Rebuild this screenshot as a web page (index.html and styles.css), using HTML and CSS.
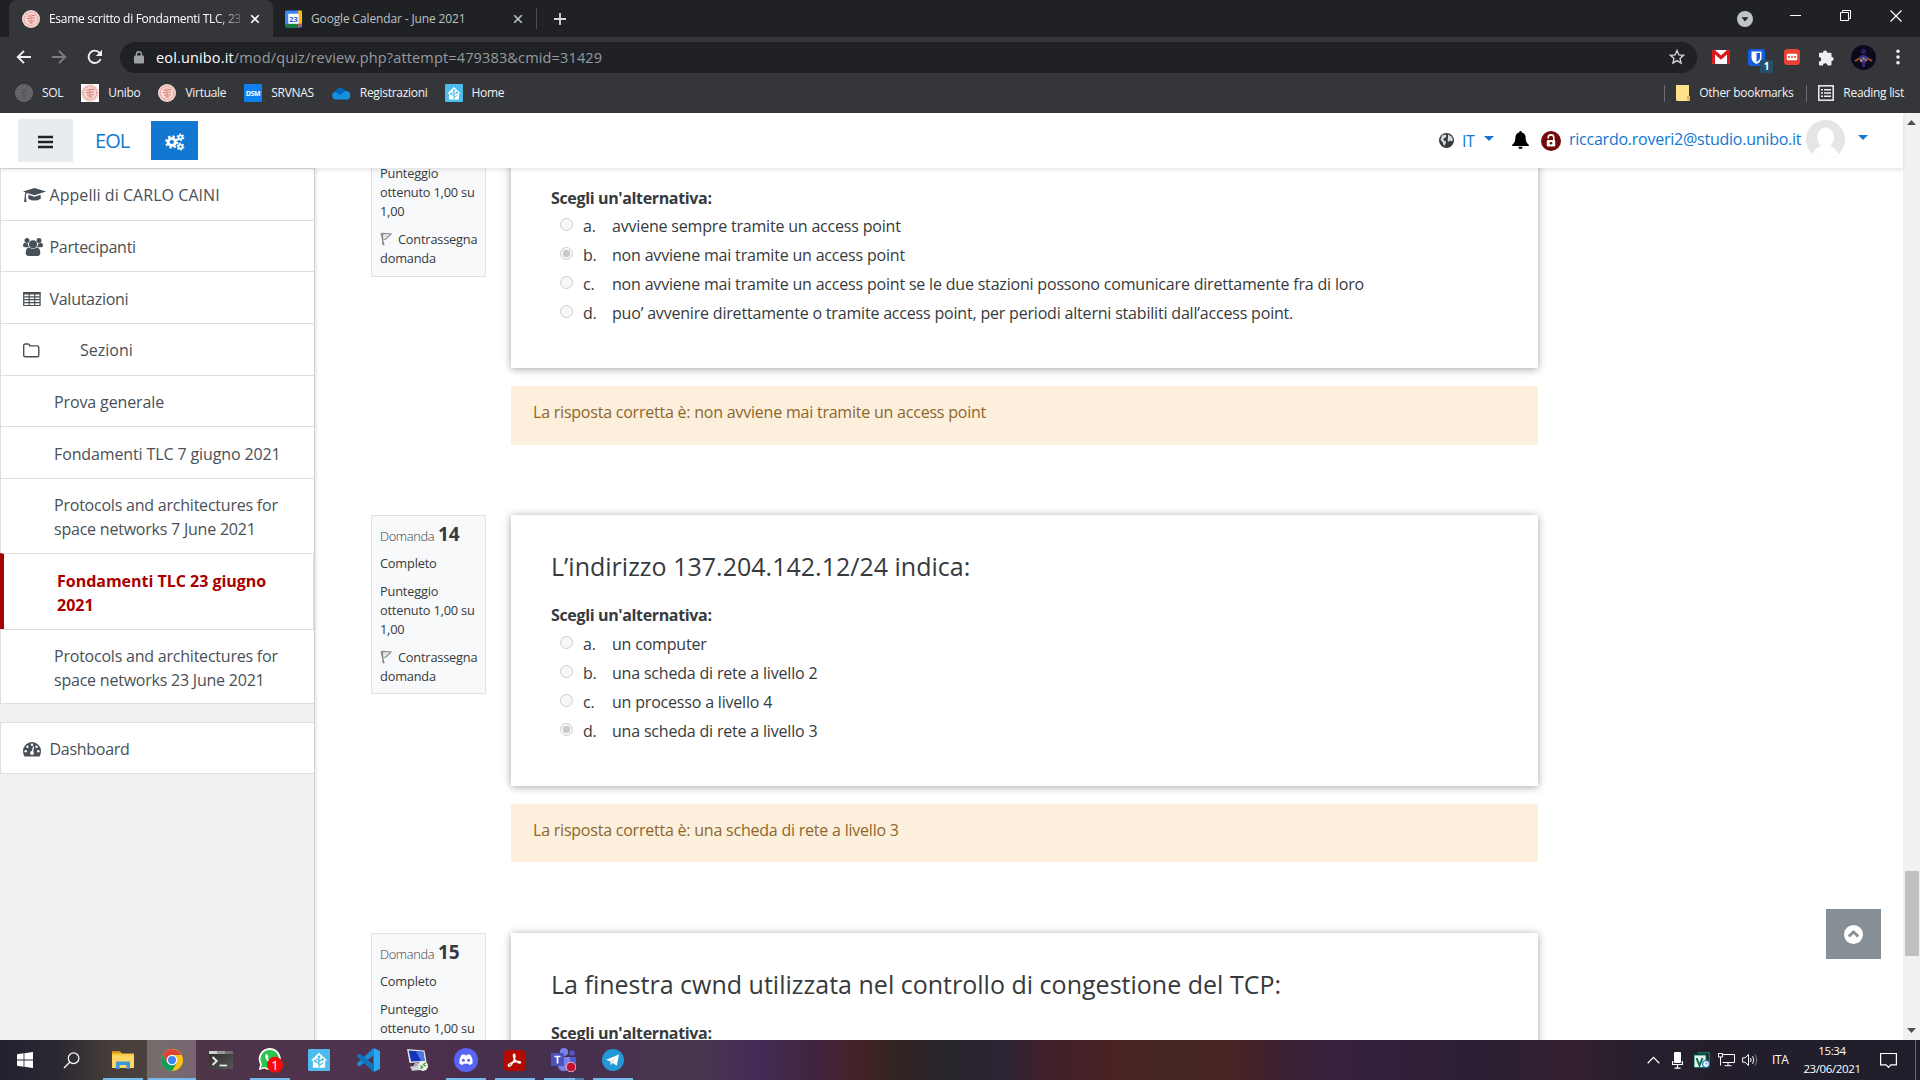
FILE: index.html
```html
<!DOCTYPE html>
<html lang="it">
<head>
<meta charset="utf-8">
<title>Esame scritto di Fondamenti TLC, 23 giugno 2021</title>
<link rel="stylesheet" href="styles.css">
</head>
<body>
<svg class="defs" width="0" height="0">
  <symbol id="seal" viewBox="0 0 18 18">
    <circle cx="9" cy="9" r="9" fill="#f6d9d5"/>
    <circle cx="9" cy="9" r="6.8" fill="none" stroke="#dc8f88" stroke-width="1.2" stroke-dasharray="1 .8"/>
    <path d="M5.5 6h3M10 5.5h3M5 8.5h3.5M10 8h3.2M6 11h2.5M9.8 10.8h3M7.5 13h3.5M9 4.5v8" stroke="#d5766e" stroke-width="1" fill="none"/>
  </symbol>
  <symbol id="close" viewBox="0 0 10 10"><path d="M1.2 1.2l7.6 7.6M8.8 1.2L1.2 8.8" stroke="currentColor" stroke-width="1.6"/></symbol>
  <symbol id="flag" viewBox="0 0 12 14"><path d="M1 1l3 12.5M2.8 12.6L2.6 1.4L11 2L6 7L3.6 7.4" fill="none" stroke="#888" stroke-width="1.2"/><path d="M4 3l5 .4-3.6 2.6z" fill="#d8d8d8"/></symbol>
  <symbol id="ha" viewBox="0 0 24 24">
    <rect width="24" height="24" rx="1.5" fill="#4cbcec"/>
    <path d="M12 4l9 8.5h-2.3V20.500H5.300V12.500H3z" fill="#fff"/>
    <path d="M12 20V9M12 16l-4-3M12 14l4-3M12 18l4.500-3M9 10.500l3 2" stroke="#4cbcec" stroke-width="1.300" fill="none"/>
    <circle cx="12" cy="8.500" r="1.500" fill="#4cbcec"/><circle cx="8" cy="13" r="1.400" fill="#4cbcec"/><circle cx="16" cy="11.500" r="1.400" fill="#4cbcec"/>
  </symbol>
</svg>

<div class="tabstrip">
  <div class="tab active">
    <svg class="i18"><use href="#seal"/></svg>
    <span class="tab-title fade">Esame scritto di Fondamenti TLC, 23</span>
    <svg class="i10"><use href="#close"/></svg>
  </div>
  <div class="tab">
    <svg class="cal" viewBox="0 0 18 18"><rect width="18" height="18" rx="1.500" fill="#4285f4"/><path d="M14 0h2.500A1.500 1.500 0 0 1 18 1.500V14h-4z" fill="#fbbc04"/><path d="M0 14h14v4H1.500A1.500 1.500 0 0 1 0 16.500z" fill="#188038"/><path d="M14 14h4l-4 4z" fill="#ea4335"/><rect x="3.500" y="3.500" width="11" height="10.500" fill="#fff"/><text x="9" y="12" text-anchor="middle" class="cal-day">23</text></svg>
    <span class="tab-title second">Google Calendar - June 2021</span>
    <svg class="i10"><use href="#close"/></svg>
  </div>
  <svg class="newtab" viewBox="0 0 14 14"><path d="M7 1v12M1 7h12" stroke="#d5d7da" stroke-width="1.800"/></svg>
  <div class="winctl">
    <svg width="16" height="16" viewBox="0 0 16 16"><circle cx="8" cy="8" r="8" fill="#c0c3c7"/><path d="M4.600 6.300h6.800L8 10.500z" fill="#202124"/></svg>
    <svg class="wb min" width="11" height="11"><path d="M0 5.500h11" stroke="#fff"/></svg>
    <svg class="wb" width="11" height="11"><path d="M.5 2.500h8v8h-8zM2.500 2.500v-2h8v8h-2" fill="none" stroke="#fff"/></svg>
    <svg class="wb" width="12" height="12"><path d="M.5.5l11 11M11.500.5l-11 11" stroke="#fff" stroke-width="1.200"/></svg>
  </div>
</div>

<div class="toolbar">
  <svg width="16" height="16" viewBox="0 0 16 16"><path d="M15 8H2M8 1.800L1.800 8 8 14.200" fill="none" stroke="#f1f1f1" stroke-width="1.900"/></svg>
  <svg width="16" height="16" viewBox="0 0 16 16"><path d="M1 8h13M8 1.800L14.200 8 8 14.200" fill="none" stroke="#7d7f83" stroke-width="1.900"/></svg>
  <svg width="16" height="16" viewBox="0 0 16 16"><path d="M13.600 10A6.200 6.200 0 1 1 12.600 3.900" fill="none" stroke="#f1f1f1" stroke-width="1.900"/><path d="M15 .8v6.200H8.800z" fill="#f1f1f1"/></svg>
  <div class="omnibox">
    <svg width="10" height="13" viewBox="0 0 10 13"><rect y="4.500" width="10" height="8" rx="1.200" fill="#9aa0a6"/><path d="M2.500 5V3.200a2.500 2.500 0 0 1 5 0V5" fill="none" stroke="#9aa0a6" stroke-width="1.500"/></svg>
    <span class="url"><b>eol.unibo.it</b>/mod/quiz/review.php?attempt=479383&amp;cmid=31429</span>
    <svg class="star" width="16" height="16" viewBox="0 0 16 16"><path d="M8 1.500l1.900 4.400 4.700.4-3.600 3.100 1.100 4.700L8 11.600l-4.100 2.500L5 9.400 1.400 6.300l4.700-.4z" fill="none" stroke="#d5d7da" stroke-width="1.300"/></svg>
  </div>
  <div class="exts">
    <svg width="18" height="14" viewBox="0 0 18 14"><rect width="18" height="14" rx="1.500" fill="#fff"/><path d="M0 1.200Q0 0 1.200 0H3l6 5.500L15 0h1.800Q18 0 18 1.200V12.800Q18 14 16.800 14H15V4.600L9 9.800 3 4.600V14H1.200Q0 14 0 12.800z" fill="#d81a1a"/></svg>
    <div class="bw">
      <svg width="17" height="17" viewBox="0 0 17 17"><rect width="17" height="17" rx="3" fill="#175ddc"/><path d="M3.500 2.500h10v6q0 4-5 6.500-5-2.500-5-6.500z" fill="#fff"/><path d="M8.500 4h3.500v4.500q0 2.700-3.500 4.500z" fill="#175ddc"/></svg>
      <span class="bw-n">1</span>
    </div>
    <svg width="16" height="16" viewBox="0 0 16 16"><rect width="16" height="16" rx="3.500" fill="#ea4335"/><rect x="2.800" y="4.800" width="10.400" height="6.400" rx="1" fill="#fff"/><path d="M4 8h2M7 8h2M10 8h2" stroke="#ea4335" stroke-width="1.700"/></svg>
    <svg width="17" height="17" viewBox="0 0 17 17"><path d="M5 3.700a2.100 2.100 0 0 1 4.200 0h3.300a1 1 0 0 1 1 1v3.100a2.100 2.100 0 0 1 0 4.200v3.500a1 1 0 0 1-1 1h-3a2.300 2.300 0 0 0-4.600 0H2a1 1 0 0 1-1-1v-3a2.200 2.200 0 0 0 0-4.500V4.700a1 1 0 0 1 1-1z" fill="#eeeef0"/></svg>
    <svg width="25" height="25" viewBox="0 0 25 25"><circle cx="12.500" cy="12.500" r="12.500" fill="#0a0a1c"/><circle cx="12.500" cy="6.500" r="2.500" fill="#29245f"/><path d="M8.500 11.500q4-3 8 0l-2 7h-4z" fill="#46308e"/><path d="M4 16l5-3M21 16l-5-3" stroke="#a0503c" stroke-width="2"/><circle cx="10" cy="15.500" r="1.200" fill="#e0a23b"/><circle cx="15" cy="15" r="1.200" fill="#e2577a"/><circle cx="12.500" cy="13.500" r="1.200" fill="#39b87c"/><path d="M11 19h3v3h-3z" fill="#33275f"/></svg>
    <svg width="4" height="16" viewBox="0 0 4 16"><g fill="#f1f1f1"><circle cx="2" cy="2.200" r="1.800"/><circle cx="2" cy="8" r="1.800"/><circle cx="2" cy="13.800" r="1.800"/></g></svg>
  </div>
</div>

<div class="bookmarks">
  <span class="bm"><svg class="i18 dim"><use href="#seal"/></svg>SOL</span>
  <span class="bm"><svg class="i18 whitebg"><use href="#seal"/></svg>Unibo</span>
  <span class="bm"><svg class="i18"><use href="#seal"/></svg>Virtuale</span>
  <span class="bm"><svg class="i18" viewBox="0 0 18 18"><rect width="18" height="18" rx="1" fill="#0f80f0"/><text x="9" y="12" text-anchor="middle" class="dsm">DSM</text></svg>SRVNAS</span>
  <span class="bm"><svg class="i18" viewBox="0 0 18 18"><path d="M4 15.500a3.900 3.900 0 0 1-.8-7.700A5.800 5.800 0 0 1 13.500 7a4.300 4.300 0 0 1 1.500 8.500z" fill="#1490df"/><path d="M3.200 7.800A5.800 5.800 0 0 1 13.500 7L8 11z" fill="#0364b8"/></svg>Registrazioni</span>
  <span class="bm"><svg class="i18"><use href="#ha"/></svg>Home</span>
  <div class="bm-right">
    <i class="vsep"></i>
    <span class="bm"><svg width="14" height="16" viewBox="0 0 14 16"><path d="M0 0h13v11h1v5H1L0 15z" fill="#fde08a"/><path d="M11 11h3v5l-3-1z" fill="#e6b93c"/></svg>Other bookmarks</span>
    <i class="vsep"></i>
    <span class="bm"><svg width="16" height="16" viewBox="0 0 16 16"><rect x=".8" y=".8" width="14.400" height="14.400" fill="none" stroke="#f1f1f1" stroke-width="1.500"/><path d="M3 4.800h2M6 4.800h7M3 8h2M6 8h7M3 11.200h2M6 11.200h7" stroke="#f1f1f1" stroke-width="1.500"/></svg>Reading list</span>
  </div>
</div>

<div class="page">
  <div class="site">
    <header class="navbar">
      <button class="nav-toggle"><svg width="15" height="14"><path d="M0 2h15M0 7h15M0 12h15" stroke="#222" stroke-width="2.400"/></svg></button>
      <a class="brand">EOL</a>
      <button class="nav-cogs"><svg width="20" height="18" viewBox="0 0 20 18"><g fill="none" stroke="#fff"><circle cx="6.800" cy="9" r="3.600" stroke-width="3"/><circle cx="6.800" cy="9" r="5.700" stroke-width="2" stroke-dasharray="2.300 2.177"/><circle cx="15.500" cy="4.300" r="2" stroke-width="1.800"/><circle cx="15.500" cy="4.300" r="3.300" stroke-width="1.200" stroke-dasharray="1.700 1.756"/><circle cx="15.500" cy="13.700" r="2" stroke-width="1.800"/><circle cx="15.500" cy="13.700" r="3.300" stroke-width="1.200" stroke-dasharray="1.700 1.756"/></g></svg></button>
      <div class="user">
        <svg width="15" height="15" viewBox="0 0 15 15"><circle cx="7.500" cy="7.500" r="7.500" fill="#373a3c"/><path d="M3 2.500l3.500-1 1 1.500-1.500 2L4 6l1 1.500 2 1-.5 2.500L5 13 3.500 9 1.500 7zM9 1.500l3.500 2 1.500 3-1 2-2-1-1.500 1.500L8.500 7l.5-2z" fill="#d8dadc"/></svg>
        <span class="lang">IT</span><i class="caret c1"></i>
        <svg class="bell" width="17" height="18" viewBox="0 0 17 18"><path d="M8.500 0a1.200 1.200 0 0 1 1.200 1.400c2.500.5 3.900 2.400 3.900 4.900 0 4 1.200 6 3.200 7.500v1.200H.2v-1.200c2-1.500 3.200-3.500 3.200-7.500 0-2.500 1.400-4.400 3.900-4.900A1.200 1.200 0 0 1 8.500 0zM6.300 15.700h4.400a2.200 2.200 0 0 1-4.400 0z" fill="#000"/></svg>
        <svg class="lockc" width="20" height="20" viewBox="0 0 20 20"><circle cx="10" cy="10" r="10" fill="#720c0c"/><rect x="5.800" y="9" width="8.400" height="6.500" rx="1" fill="#fff"/><path d="M7.200 7.500V6.500a2.800 2.600 0 0 1 5.600 0V9.500" fill="none" stroke="#fff" stroke-width="1.600"/><circle cx="10" cy="12.200" r="1.300" fill="#720c0c"/></svg>
        <span class="mail">riccardo.roveri2@studio.unibo.it</span>
        <svg class="avatar" width="39" height="39" viewBox="0 0 39 39"><clipPath id="av"><circle cx="19.500" cy="19.500" r="19.500"/></clipPath><g clip-path="url(#av)"><rect width="39" height="39" fill="#e5e5e5"/><ellipse cx="19.500" cy="17.500" rx="8.500" ry="10" fill="#fff"/><path d="M5 39Q7 29 15 25.500h9Q32 29 34 39z" fill="#fff"/></g></svg>
        <i class="caret c2"></i>
      </div>
    </header>

    <div class="body">
      <nav class="drawer">
        <a class="item"><svg width="23" height="16" viewBox="0 0 23 16"><path d="M11.500 1L23 4.600 11.500 8.200 4 5.900Q2.800 7 2.900 9l.6 6H1l.8-6Q1.600 7 2.600 5.400L0 4.600zM5.500 7.800l6 1.900 6-1.900.4 3.600q-2.800 2.200-6.400 2.200T5.100 11.400z" fill="#495057"/></svg><span class="l0">Appelli di CARLO CAINI</span></a>
        <a class="item"><svg width="20" height="18" viewBox="0 0 20 18"><g fill="#495057"><circle cx="4" cy="2.500" r="2.500"/><circle cx="16" cy="2.500" r="2.500"/><circle cx="10" cy="6.300" r="4"/><path d="M0 8q0-3 2-3.200Q4 6 5 5.200 4.600 7.500 6 9.300H2.300Q0 9.300 0 8zM20 8q0-3-2-3.200Q16 6 15 5.200q.4 2.300-1 4.100h3.700Q20 9.300 20 8zM2.700 15q0-5.400 3.600-5.600Q10 12 13.700 9.400q3.600.2 3.600 5.600 0 3-3 3H5.700q-3 0-3-3z"/></g></svg><span class="l1">Partecipanti</span></a>
        <a class="item"><svg width="18" height="16" viewBox="0 0 18 16"><path d="M.7 1.500h16.400v13H.7zM.7 5.800h16.400M.7 8.700h16.400M.7 11.600h16.400M6.200 3v11.500M11.700 3v11.500" fill="none" stroke="#495057" stroke-width="1.200"/><path d="M.5 1.500h17v2H.5z" fill="#495057"/></svg><span class="l1">Valutazioni</span></a>
        <a class="item"><svg width="17" height="15" viewBox="0 0 17 15"><path d="M.7 2.500Q.7 1 2.200 1h3Q6.700 1 6.700 2.900h7.600q1.500 0 1.500 1.500v7.800q0 1.500-1.500 1.500H2.200q-1.500 0-1.500-1.500z" fill="none" stroke="#495057" stroke-width="1.400"/></svg><span class="l2">Sezioni</span></a>
        <a class="item sub">Prova generale</a>
        <a class="item sub">Fondamenti TLC 7 giugno 2021</a>
        <a class="item sub two">Protocols and architectures for space networks 7 June 2021</a>
        <a class="item sub two current">Fondamenti TLC 23 giugno 2021</a>
        <a class="item sub two">Protocols and architectures for space networks 23 June 2021</a>
        <a class="item dash"><svg width="18" height="15" viewBox="0 0 18 15"><path d="M9 0a9 9 0 0 1 9 9q0 3-1.500 5.500h-15Q0 12 0 9a9 9 0 0 1 9-9z" fill="#495057"/><g fill="#fff"><circle cx="9" cy="2.800" r="1.200"/><circle cx="4.400" cy="4.700" r="1.200"/><circle cx="13.600" cy="4.700" r="1.200"/><circle cx="2.700" cy="9.200" r="1.200"/><circle cx="15.300" cy="9.200" r="1.200"/></g><path d="M10.600 4.500L9.200 10.500" stroke="#fff" stroke-width="1.200"/><circle cx="9" cy="11" r="1.900" fill="#fff"/></svg><span class="l1">Dashboard</span></a>
      </nav>

      <main class="quiz">
        <section class="question scrolled">
          <aside class="info">
            <p class="grade">Punteggio<br>ottenuto 1,00 su<br>1,00</p>
            <p class="mark"><svg width="12" height="14"><use href="#flag"/></svg>Contrassegna domanda</p>
          </aside>
          <div class="content">
            <div class="card">
              <p class="prompt">Scegli un'alternativa:</p>
              <ul class="answers">
                <li><i class="radio"></i><em>a.</em>avviene sempre tramite un access point</li>
                <li><i class="radio on"></i><em>b.</em>non avviene mai tramite un access point</li>
                <li><i class="radio"></i><em>c.</em>non avviene mai tramite un access point se le due stazioni possono comunicare direttamente fra di loro</li>
                <li><i class="radio"></i><em>d.</em>puo’ avvenire direttamente o tramite access point, per periodi alterni stabiliti dall’access point.</li>
              </ul>
            </div>
            <div class="outcome">La risposta corretta è: non avviene mai tramite un access point</div>
          </div>
        </section>

        <section class="question">
          <aside class="info">
            <p class="no">Domanda <b>14</b></p><p class="state">Completo</p>
            <p class="grade">Punteggio<br>ottenuto 1,00 su<br>1,00</p>
            <p class="mark"><svg width="12" height="14"><use href="#flag"/></svg>Contrassegna domanda</p>
          </aside>
          <div class="content">
            <div class="card">
              <h3 class="qtext">L’indirizzo 137.204.142.12/24 indica:</h3>
              <p class="prompt">Scegli un'alternativa:</p>
              <ul class="answers">
                <li><i class="radio"></i><em>a.</em>un computer</li>
                <li><i class="radio"></i><em>b.</em>una scheda di rete a livello 2</li>
                <li><i class="radio"></i><em>c.</em>un processo a livello 4</li>
                <li><i class="radio on"></i><em>d.</em>una scheda di rete a livello 3</li>
              </ul>
            </div>
            <div class="outcome">La risposta corretta è: una scheda di rete a livello 3</div>
          </div>
        </section>

        <section class="question">
          <aside class="info">
            <p class="no">Domanda <b>15</b></p><p class="state">Completo</p>
            <p class="grade">Punteggio<br>ottenuto 1,00 su</p>
          </aside>
          <div class="content">
            <div class="card">
              <h3 class="qtext">La finestra cwnd utilizzata nel controllo di congestione del TCP:</h3>
              <p class="prompt">Scegli un'alternativa:</p>
            </div>
          </div>
        </section>
      </main>
      <button class="totop"><svg width="19" height="19" viewBox="0 0 19 19"><circle cx="9.500" cy="9.500" r="9.500" fill="#fff"/><path d="M4.800 11.600L9.500 7l4.700 4.600" fill="none" stroke="#868e96" stroke-width="2.800"/></svg></button>
    </div>
  </div>
  <div class="scrollbar">
    <svg width="9" height="5"><path d="M0 5L4.500 0 9 5z" fill="#505050"/></svg>
    <div class="thumb"></div>
    <svg width="9" height="5"><path d="M0 0l4.500 5L9 0z" fill="#505050"/></svg>
  </div>
</div>

<div class="taskbar">
  <div class="slot"><svg width="16" height="16" viewBox="0 0 16 16"><path d="M0 2.200l6.600-.9v6.300H0zM7.400 1.200L16 0v7.600H7.400zM0 8.400h6.600v6.300L0 13.800zM7.400 8.400H16V16l-8.600-1.200z" fill="#fff"/></svg></div>
  <div class="slot"><svg class="find" width="17" height="17" viewBox="0 0 18 18"><circle cx="11.200" cy="6.600" r="5.600" fill="none" stroke="#fff" stroke-width="1.300"/><path d="M7.200 10.800L1 17" stroke="#fff" stroke-width="1.300"/></svg></div>
  <div class="slot run"><svg width="22" height="20" viewBox="0 0 22 20"><path d="M0 1.500h8l2 2h12V18H0z" fill="#f9c846"/><path d="M0 1.500h8l1.500 2H0z" fill="#e09b10"/><path d="M0 5.500h22V18H0z" fill="#fdd663"/><path d="M4 19v-6.500q0-1 1-1h12q1 0 1 1V19h-3.500v-4h-7v4z" fill="#3a96dd"/></svg></div>
  <div class="slot run front"><svg width="22" height="22" viewBox="0 0 24 24"><circle cx="12" cy="12" r="12" fill="#fbc116"/><path d="M1.600 6A12 12 0 0 0 0 12 12 12 0 0 0 12 24l5.200-9-10.400 0z" fill="#0f9d58"/><path d="M1.600 6A12 12 0 0 1 22.400 6.500H12L6.800 15z" fill="#db4437"/><circle cx="12" cy="12" r="5.800" fill="#fff"/><circle cx="12" cy="12" r="4.500" fill="#4285f4"/></svg></div>
  <div class="slot"><svg width="24" height="18" viewBox="0 0 24 18"><defs><linearGradient id="tg" x2="1" y2="1"><stop stop-color="#2b2b2b"/><stop offset="1" stop-color="#565656"/></linearGradient></defs><rect width="24" height="18" fill="url(#tg)"/><path d="M0 0h8v3H0z" fill="#cfcfcf"/><path d="M8 0h8v3H8z" fill="#999"/><path d="M16 0h8v3h-8z" fill="#6d6d6d"/><path d="M3.500 6l4.200 4-4.200 4" fill="none" stroke="#e6e6e6" stroke-width="2"/><path d="M10.500 14.500H18" stroke="#e6e6e6" stroke-width="1.800"/></svg></div>
  <div class="slot run"><svg class="wa" width="25" height="25" viewBox="0 0 25 25"><path d="M.8 22L2.200 16.500A11 11 0 1 1 6.300 20.600z" fill="#fff"/><path d="M2.800 20L3.900 16A9.200 9.200 0 1 1 6.800 18.900z" fill="#2cc64f"/><path d="M8.800 5.800q-2 1-1.500 3.400 1.300 4.800 6.400 6.400 2.700.3 3-2.600l-2.600-1.200-1.200 1.300q-2.300-1-3.400-3.400l1-1.200z" fill="#fff"/><circle cx="17" cy="16.800" r="8" fill="#f70b0b"/><text x="17" y="21.500" text-anchor="middle" class="wan">1</text></svg></div>
  <div class="slot"><svg width="22" height="22"><use href="#ha"/></svg></div>
  <div class="slot"><svg width="24" height="24" viewBox="0 0 24 24"><path d="M17.500 0L24 3v18l-6.500 3z" fill="#2aa8f2"/><path d="M17.500 0L1 15.200q-.8.800 0 1.500l1.600 1.400q.7.500 1.400 0L17.500 7.500z" fill="#1b8bd6"/><path d="M17.500 24L1 8.800q-.8-.8 0-1.500l1.600-1.400q.7-.5 1.400 0l13.500 10.600z" fill="#1273b8"/></svg></div>
  <div class="slot"><svg width="24" height="24" viewBox="0 0 24 24"><path d="M2 1l17.500 1.500 2 11.500L4.500 15z" fill="#dfe3e8"/><path d="M3.700 2.500l14.500 1.200 1.500 9-13.600.9z" fill="#1733b8"/><path d="M11 3.200l7.200.5 1.500 9-3.700.3z" fill="#5076e0"/><path d="M10 15h6l2 3.500H8z" fill="#aeb4bc"/><path d="M5 18.500l12-.8 3 4-13 1z" fill="#ced2d6"/><circle cx="18" cy="18" r="5" fill="#e8efe4"/><path d="M15.500 17.500l2 1.800-2 1.500M20.500 15l-2 1.600 2 1.700" stroke="#3c9a37" stroke-width="1.300" fill="none"/></svg></div>
  <div class="slot run"><svg width="24" height="24" viewBox="0 0 24 24"><circle cx="12" cy="12" r="12" fill="#5865f2"/><path d="M7.300 7.300q1.500-.9 3-1l.5.900h2.400l.5-.9q1.500.1 3 1 2.300 3.400 2 8-1.800 1.400-3.500 1.800l-.9-1.500q-2.300.5-4.600 0L8.800 17.100Q7 16.700 5.300 15.300q-.3-4.600 2-8z" fill="#fff"/><circle cx="9.400" cy="12.200" r="1.500" fill="#5865f2"/><circle cx="14.600" cy="12.200" r="1.500" fill="#5865f2"/></svg></div>
  <div class="slot run"><svg width="21" height="21" viewBox="0 0 21 21"><rect width="21" height="21" rx="3.500" fill="#b30b00"/><path d="M4.500 15.800c-1-1.500 3-3.300 6.500-4 3-.6 5.700-.5 5.500.8-.3 1.400-4.600-.6-6.300-4C9 6 9.300 4 10.300 4.200c1.500.3.500 5-1.500 8.500-1.600 2.700-3.500 4.300-4.300 3.100z" fill="none" stroke="#fff" stroke-width="1.400"/></svg></div>
  <div class="slot run more"><svg width="25" height="24" viewBox="0 0 25 24"><circle cx="13" cy="4" r="4" fill="#7b83eb"/><circle cx="21" cy="5" r="2.800" fill="#5059c9"/><path d="M17 9h7q1 0 1 1v6q0 4-4 4h-4z" fill="#5059c9"/><path d="M7 9h12v8q0 6-6 6t-6-6z" fill="#7b83eb"/><rect y="5" width="13" height="13" rx="1" fill="#4b53bc"/><path d="M3.500 8.500h6M6.500 8.500v7" stroke="#fff" stroke-width="1.700"/><circle cx="20" cy="19" r="4.800" fill="#c4112f" stroke="#e6c7d4" stroke-width=".9"/></svg></div>
  <div class="slot run"><svg width="22" height="22" viewBox="0 0 22 22"><circle cx="11" cy="11" r="11" fill="#2299d6"/><path d="M4 10.800l13-5.300-2.200 11.300-4-2.700-2 2-.5-3.600z" fill="#fff"/><path d="M8.300 12.500l6.500-4.700-5 5.400-.8 2.700z" fill="#b9d5e8"/></svg></div>
  <div class="tray">
    <svg class="t1" width="13" height="8"><path d="M.7 7.200L6.500 1.400l5.800 5.800" fill="none" stroke="#fff" stroke-width="1.300"/></svg>
    <svg class="t2" width="11" height="17" viewBox="0 0 11 17"><rect x="2" width="7" height="11" rx="1" fill="#fff"/><path d="M.6 9v3.500h9.800V9M5.500 13v3M2.500 16.200h6" fill="none" stroke="#fff" stroke-width="1.200"/></svg>
    <svg class="t3" width="16" height="16" viewBox="0 0 16 16"><path d="M3.500.7h11.800V11" fill="none" stroke="#0b7a5c" stroke-width="1.400"/><rect y="3" width="12" height="12.500" fill="#e9f3ee" stroke="#0b7a5c"/><path d="M2.500 6l3 7.500 3-7.500" fill="none" stroke="#0b6e53" stroke-width="2"/><circle cx="12" cy="12" r="4" fill="#2b7fc0"/><circle cx="12" cy="12" r="2.700" fill="#fff"/><path d="M12 10.500V12h1.300" stroke="#2b7fc0" fill="none"/></svg>
    <svg class="t4" width="17" height="16" viewBox="0 0 17 16"><path d="M5 2.500h11.500v8H4.500M10 10.500v3M6.500 13.700h7M.5 1.500h4v3.500h-4zM2.500 5v8.500" fill="none" stroke="#fff"/></svg>
    <svg class="t5" width="17" height="14" viewBox="0 0 17 14"><path d="M.6 4.800h2.500L6.500 1.500v11L3.100 9.200H.6z" fill="none" stroke="#fff"/><path d="M8.500 5q1.200 2 0 4M10.600 3.200q2.400 3.800 0 7.600" fill="none" stroke="#fff"/><path d="M13 1.500q3.400 5.500 0 11" fill="none" stroke="#888"/></svg>
    <span class="lng">ITA</span>
    <div class="clock"><span>15:34</span><span>23/06/2021</span></div>
    <svg width="17" height="17" viewBox="0 0 17 17"><path d="M.6 1.500h15.800v11.300h-5.600L8.500 15.300 6.200 12.800H.6z" fill="none" stroke="#fff" stroke-width="1.200"/></svg>
    <i class="peek"></i>
  </div>
</div>
</body>
</html>
```
FILE: styles.css
```css
* { box-sizing: border-box; }
html, body { margin: 0; height: 1080px; overflow: hidden; }
body {
  display: flex; flex-direction: column; width: 1920px; background: #fff;
  font: 16px/24px "Open Sans", "Noto Sans", sans-serif; color: #373a3c;
}
svg { display: block; flex: none; }
button { border: 0; padding: 0; display: flex; align-items: center; justify-content: center; flex: none; }
p, h3, ul { margin: 0; padding: 0; }
.defs { position: absolute; }
.i18 { width: 18px; height: 18px; }
.i10 { width: 10px; height: 10px; }

/* browser chrome */
.tabstrip { display: flex; height: 37px; background: #202124; padding-left: 9px; align-items: stretch; color: #bdc1c6; flex: none; }
.tab { display: flex; align-items: center; width: 264px; padding: 1px 13px 0; }
.tab.active { background: #35363a; border-radius: 8px 8px 0 0; color: #fff; }
.tab-title { font-size: 12px; letter-spacing: -.3px; margin-left: 9px; width: 192px; white-space: nowrap; overflow: hidden; margin-right: 10px; }
.tab-title.second { letter-spacing: -.14px; margin-right: 11px; }
.fade { -webkit-mask-image: linear-gradient(90deg, #000 86%, rgba(0,0,0,.3)); mask-image: linear-gradient(90deg, #000 86%, rgba(0,0,0,.3)); }
.cal { width: 17px; height: 18px; }
.cal-day { font: bold 8px "Open Sans", sans-serif; fill: #1a5fd0; }
.tab:nth-child(2) { border-right: 1px solid #4a4c50; margin: 8px 0 8px; padding: 1px 13px 0 12px; }
.newtab { width: 14px; height: 14px; margin: 12px 0 0 16px; }
.winctl { margin-left: auto; display: flex; align-items: flex-start; padding: 10px 18px 0 0; gap: 39px; }
.winctl svg:first-child { margin: 1px -2px 0 0; }

.toolbar { display: flex; align-items: center; height: 41px; background: #35363a; padding: 0 22px 3px 16px; gap: 19px; flex: none; }
.toolbar > svg { margin-top: 2px; }
.toolbar > svg:nth-child(3) { margin-left: 1px; margin-right: -1px; }
.omnibox { display: flex; align-items: center; width: 1577px; height: 31px; border-radius: 16px; background: #202124; margin: 2px -1px 0 -1px; padding: 0 12px 0 14px; flex: none; }
.url { font-size: 14.500px; letter-spacing: .15px; color: #969ba1; margin: 1px 0 0 12px; }
.url b { font-weight: 400; color: #fff; }
.star { margin-left: auto; }
.exts { display: flex; align-items: center; gap: 18px; margin: 2px 0 0 -3px; flex: 1; }
.bw { position: relative; margin: 0 1px 0 -1px; padding-left: 3px; }
.bw-n { position: absolute; left: 13px; top: 11px; width: 13px; height: 13px; border-radius: 2px; background: #24506b; color: #fff; font: bold 10px/13px "Open Sans", sans-serif; text-align: center; }
.exts svg:nth-last-child(2) { margin-left: -2px; }
.exts svg:last-child { margin-left: 2px; }

.bookmarks { display: flex; align-items: center; height: 35px; background: #35363a; padding: 0 15px 5px 15px; color: #f1f3f4; font-size: 12px; letter-spacing: -.3px; flex: none; }
.bm { display: flex; align-items: center; gap: 9px; margin-right: 18px; }
.bm:nth-child(5) { gap: 10px; }
.bm:nth-child(6) { margin-left: 0; gap: 8px; }
.dim { opacity: .3; filter: grayscale(1); }
.whitebg { background: #fff; }
.dsm { font: bold 7px "Open Sans", sans-serif; fill: #fff; }
.bm-right { margin-left: auto; display: flex; align-items: center; }
.vsep { width: 1px; height: 17px; background: #6b6d71; margin-right: 12px; }
.bm-right .vsep + .bm { margin-left: -1px; }
.bm-right .bm { margin-right: 13px; }
.bm-right .bm:last-child { margin-right: 1px; }

/* site */
.page { display: flex; height: 927px; flex: none; }
.site { display: flex; flex-direction: column; width: 1903px; }
.navbar { display: flex; align-items: center; height: 55px; padding: 0 35px 0 18px; background: #fff; box-shadow: 0 2px 4px rgba(0,0,0,.1); position: relative; z-index: 2; flex: none; }
.nav-toggle { width: 55px; height: 43px; background: #e9ecef; padding: 2px 1px 0 0; }
.brand { color: #1177d1; font-size: 20px; letter-spacing: -.9px; margin: 1px 0 0 22px; width: 56px; }
.nav-cogs { width: 47px; height: 39px; background: #1177d1; padding-top: 2px; }
.user { display: flex; align-items: center; margin-left: auto; color: #1177d1; }
.lang { margin-left: 8px; width: 22px; letter-spacing: -.5px; }
.caret { border: 5px solid transparent; border-top-color: #1177d1; border-bottom: 0; margin-top: -4px; }
.bell { margin: -2px 0 0 18px; }
.lockc { margin-left: 12px; }
.mail { letter-spacing: -.24px; margin: -4px 0 0 8px; width: 233px; }
.avatar { margin: -2px 0 0 4px; }
.c2 { margin-left: 13px; margin-top: -7px; }

.body { display: flex; height: 872px; overflow: hidden; position: relative; }
.drawer { width: 315px; background: #f1f1f1; border-right: 1px solid #cfcfcf; box-shadow: 1px 0 4px rgba(0,0,0,.12); flex: none; color: #495057; z-index: 1; }
.item { display: flex; align-items: center; height: 51.670px; border: 1px solid #dedfe0; border-width: 1px 0 0 1px; background: #fff; padding: 2px 20px 0 22px; }
.item svg[width="23"] { margin-right: 4px; }
.item svg[width="20"] { margin-right: 7px; }
.item svg[width="18"] { margin-right: 9px; }
.item svg[width="17"] { margin-right: 10px; }
.item span { letter-spacing: -.28px; margin-left: -.5px; }
.item .l0 { letter-spacing: .05px; }
.item .l2 { margin-left: 30px; letter-spacing: 0; }
.item.sub { padding-left: 53px; letter-spacing: -.12px; }
.item.two { height: 75.500px; letter-spacing: -.22px; }
.item.two.current { border-left: 4px solid #a80000; padding-left: 53px; color: #a80000; font-weight: 700; letter-spacing: -.02px; border-right: 1px solid #dedfe0; }
.item.dash { margin-top: 18px; height: 52px; border-bottom: 1px solid #dedfe0; }
.item.current + .item { border-bottom: 1px solid #dedfe0; }

.quiz { flex: 1; margin-top: -71px; padding-left: 56px; }
.question { display: flex; gap: 25px; height: 418px; align-items: flex-start; }
.info { width: 115px; background: #f8f9fa; border: 1px solid #dee2e6; padding: 5px 0 8px 8px; font-size: 12.800px; line-height: 19px; letter-spacing: -.2px; height: 179px; }
.scrolled .info { padding-top: 66px; height: 180px; }
.no { font-weight: 300; line-height: 26px; letter-spacing: -.35px; margin-bottom: 4px; }
.no b { font-size: 19px; font-weight: 700; letter-spacing: -.1px; margin-left: 1px; }
.state { line-height: 20px; margin-bottom: 9px; }
.grade { margin-bottom: 9px; }
.mark svg { display: inline-block; vertical-align: -2px; margin-right: 6px; }
.content { width: 1027px; }
.card { height: 271px; padding: 34px 40px; background: #fff; box-shadow: 0 1px 8px rgba(0,0,0,.36); }
.scrolled .card { padding-top: 89px; }
.qtext { font-size: 25px; line-height: 34px; font-weight: 400; margin-bottom: 20px; letter-spacing: .01px; }
.prompt { font-weight: 700; letter-spacing: -.35px; margin-bottom: 3px; }
.scrolled .prompt { margin-bottom: 2px; }
.answers { list-style: none; padding-left: 9px; letter-spacing: -.19px; }
.answers li { display: flex; height: 29px; line-height: 29px; align-items: center; white-space: nowrap; }
.answers em { font-style: normal; width: 29px; margin-left: 10px; }
.radio { width: 13px; height: 13px; border: 1px solid #cdcdcd; border-radius: 50%; background: #f7f7f7; margin-top: -4px; flex: none; }
.radio.on { background: radial-gradient(circle, #cacaca 0 3.500px, #f7f7f7 4px); }
.outcome { height: 58px; margin-top: 18px; padding: 14px 22px; background: #fcefdc; color: #8e662e; letter-spacing: -.22px; }
.scrolled .outcome { height: 59px; }
.totop { position: absolute; left: 1826px; top: 741px; width: 55px; height: 50px; background: #868e96; }

.scrollbar { width: 17px; background: #f1f1f1; padding: 7px 0; display: flex; flex-direction: column; align-items: center; }
.scrollbar .thumb { width: 14px; height: 85px; margin: 746px 0 auto; background: #c1c1c1; }

/* taskbar */
.taskbar {
  display: flex; height: 40px; flex: none; color: #fff;
  background: linear-gradient(90deg, #21202f 0, #2b2932 60px, #483f3c 115px, #4a403c 150px, #4f3548 205px, #4f324c 330px, #4c2f4c 440px, #45304f 520px, #48304f 600px, #48364f 660px, #48364f 700px, #452a57 755px, #40253f 815px, #46222a 855px, #33241f 890px, #26252b 945px, #2c2434 1000px, #40202a 1045px, #4a2224 1110px, #442822 1180px, #4a2422 1230px, #3a2033 1290px, #35203f 1350px, #2a1f33 1490px, #331f30 1570px, #261e2c 1640px, #1f1e2b 1920px);
}
.slot { display: flex; align-items: center; justify-content: center; width: 49px; position: relative; flex: none; }
.find { margin-right: 4px; }
.run::after { content: ""; position: absolute; left: 5px; right: 4px; bottom: 0; height: 2px; background: #76b9ed; }
.front { background: rgba(255,255,255,.24); }
.front::after { left: 1px; right: 0; }
.more::after { background: linear-gradient(90deg, #76b9ed 31px, #4e81b0 31px); }
.wa { margin-left: 2px; }
.wan { font: 13px "Open Sans", sans-serif; fill: #fff; }
.tray { display: flex; align-items: center; margin-left: auto; }
.t1 { margin-right: 12px; }
.t2 { margin-right: 11px; }
.t3 { margin-right: 8px; }
.t4 { margin-right: 7px; }
.t5 { margin-right: 13px; }
.lng { font-size: 12px; letter-spacing: -.4px; width: 31px; }
.clock { display: flex; flex-direction: column; align-items: center; width: 58px; font-size: 11.500px; line-height: 18px; letter-spacing: -.38px; margin-right: 19px; white-space: nowrap; }
.peek { width: 1px; height: 40px; background: #6b6a74; margin: 0 4px 0 18px; }
```
